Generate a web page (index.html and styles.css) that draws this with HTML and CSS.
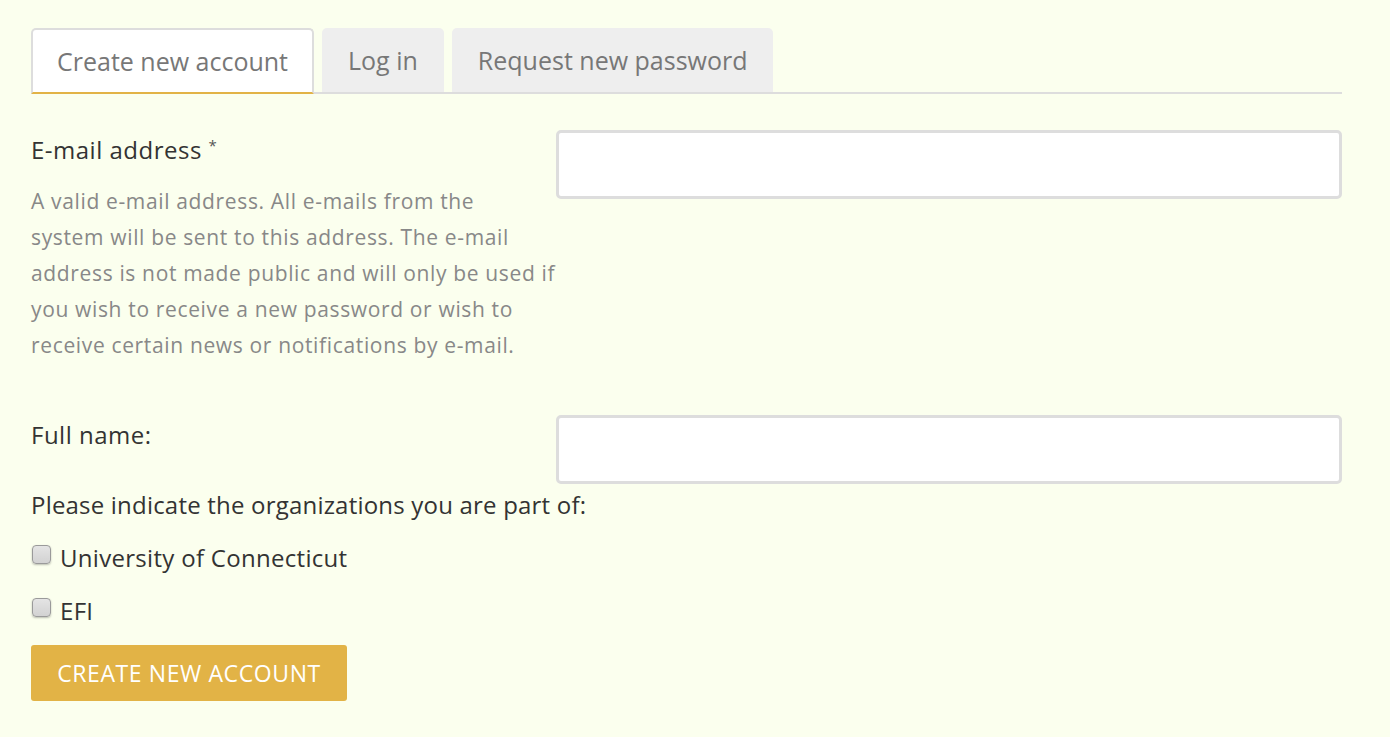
FILE: index.html
```html
<!DOCTYPE html>
<html lang="en">
<head>
<meta charset="utf-8">
<title>Create new account</title>
<link rel="stylesheet" href="styles.css">
</head>
<body>
<div class="page">
  <ul class="tabs">
    <li class="tab active">Create new account</li>
    <li class="tab">Log in</li>
    <li class="tab">Request new password</li>
  </ul>
  <form class="form">
    <div class="row row-email">
      <div class="label-col">
        <label class="label">E-mail address <span class="req">*</span></label>
        <p class="desc">A valid e-mail address. All e-mails from the<br>system will be sent to this address. The e-mail<br>address is not made public and will only be used if<br>you wish to receive a new password or wish to<br>receive certain news or notifications by e-mail.</p>
      </div>
      <input class="text-input" type="text">
    </div>
    <div class="row row-name">
      <div class="label-col">
        <label class="label">Full name:</label>
      </div>
      <input class="text-input" type="text">
    </div>
    <p class="orgs">Please indicate the organizations you are part of:</p>
    <label class="check"><input type="checkbox" class="box"><span>University of Connecticut</span></label>
    <label class="check"><input type="checkbox" class="box"><span>EFI</span></label>
    <button type="button" class="submit">CREATE NEW ACCOUNT</button>
  </form>
</div>
</body>
</html>
```

FILE: styles.css
```css
html, body {
  margin: 0;
  padding: 0;
  background: #fbffee;
}
body {
  font-family: "Open Sans", Lato, sans-serif;
  color: #333;
}
.page {
  padding: 28px 48px 0 31px;
}
.tabs {
  list-style: none;
  margin: 0;
  padding: 0;
  display: flex;
  gap: 8px;
  border-bottom: 2px solid #ddd;
}
.tab {
  height: 64px;
  padding: 0 26px;
  display: flex;
  align-items: center;
  font-size: 25px;
  color: #777;
  background: #eee;
  border-radius: 5px 5px 0 0;
  margin-bottom: -2px;
  border-bottom: 2px solid #ddd;
}
.tab.active {
  background: #fff;
  border: 2px solid #ddd;
  border-bottom: 2px solid #e2b346;
  height: 62px;
  padding: 0 24px;
}
.form {
  margin-top: 36px;
}
.row {
  display: grid;
  grid-template-columns: 525px 786px;
  align-items: start;
}
.label-col {
  padding-top: 2px;
  min-width: 0;
}
.label {
  display: block;
  font-size: 24px;
  letter-spacing: 0.5px;
  line-height: 36px;
}
.req {
  font-size: 15px;
  color: #555;
  vertical-align: top;
  line-height: 26px;
}
.desc {
  margin: 15px -60px 0 0;
  font-size: 21px;
  letter-spacing: 0.65px;
  line-height: 36px;
  color: #888;
  white-space: nowrap;
}
.text-input {
  box-sizing: border-box;
  height: 69px;
  width: 100%;
  border: 3px solid #ddd;
  border-radius: 5px;
  background: #fff;
  margin: 0;
}
.row-name {
  margin-top: 52px;
}
.orgs {
  margin: 3px 0 0;
  font-size: 24px;
  letter-spacing: 0.2px;
  line-height: 36px;
}
.check {
  display: flex;
  align-items: center;
  gap: 9px;
  margin-top: 17px;
  font-size: 24px;
  letter-spacing: 0.3px;
  line-height: 36px;
}
.box {
  appearance: none;
  -webkit-appearance: none;
  width: 19px;
  height: 19px;
  margin: -7px 0 0 1px;
  border: 1px solid #9a9a9a;
  border-radius: 4px;
  background: linear-gradient(#e4e4e4, #d2d2d2);
  box-shadow: 0 1px 2px rgba(0,0,0,0.25);
}
.submit {
  display: block;
  margin-top: 16px;
  width: 316px;
  height: 56px;
  border: 0;
  border-radius: 3px;
  background: #e2b346;
  color: #fff;
  font-family: "Open Sans", Lato, sans-serif;
  font-size: 23px;
  letter-spacing: 0.6px;
  padding: 0;
}
```
